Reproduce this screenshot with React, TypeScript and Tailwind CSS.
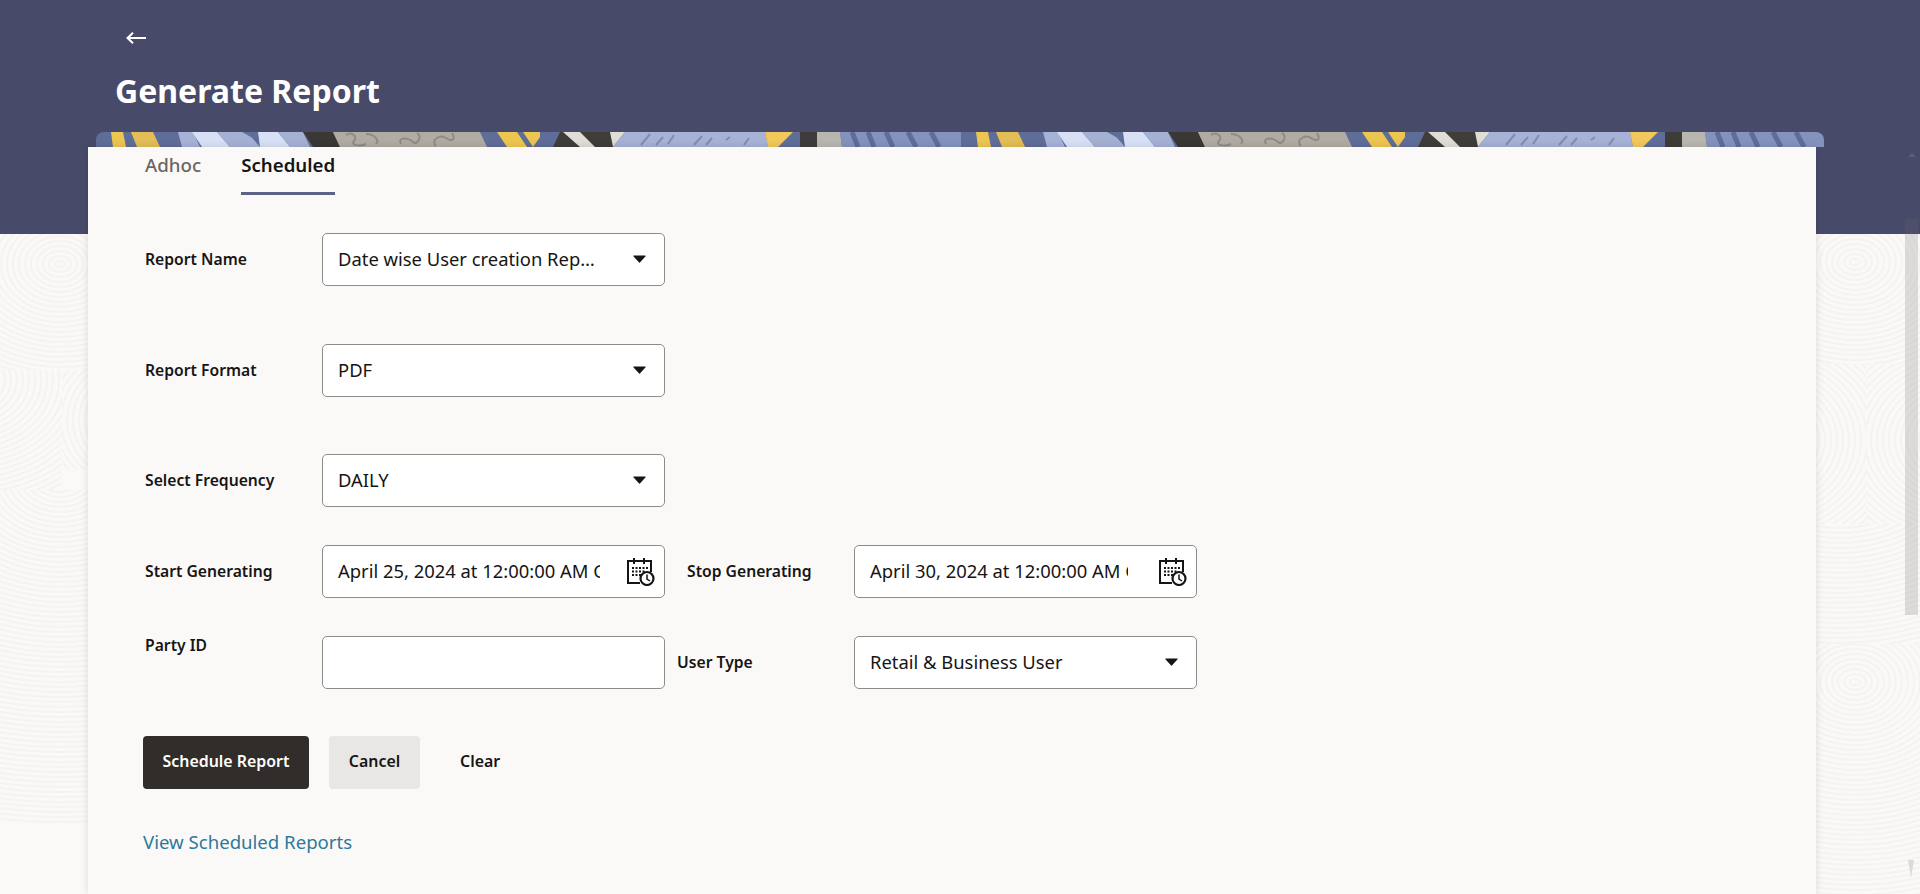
import { ReactNode } from 'react';

// each zone clips one swirl so the rings don't cross each other
const swirls = [
    { x: 0, y: 234, w: 88, h: 136, cx: 60, cy: 264, n: 34 },
    { x: 0, y: 370, w: 62, h: 120, cx: -30, cy: 380, n: 34 },
    { x: 62, y: 370, w: 26, h: 100, cx: 150, cy: 420, n: 20 },
    { x: 0, y: 490, w: 88, h: 404, cx: 60, cy: 474, n: 70 },
    { x: 1816, y: 234, w: 104, h: 130, cx: 1855, cy: 262, n: 30 },
    { x: 1816, y: 364, w: 50, h: 160, cx: 1760, cy: 440, n: 30 },
    { x: 1866, y: 364, w: 54, h: 160, cx: 1960, cy: 440, n: 30 },
    { x: 1816, y: 524, w: 104, h: 120, cx: 1840, cy: 440, n: 50 },
    { x: 1816, y: 644, w: 104, h: 250, cx: 1855, cy: 682, n: 44 },
];

function FingerprintBackground() {
    return (
        <svg className="absolute inset-0" width="1920" height="894" fill="none" stroke="#f5f3f1" strokeWidth="2">
            {swirls.map((s) => (
                <svg key={`${s.x}-${s.y}`} x={s.x} y={s.y} width={s.w} height={s.h}>
                    {Array.from({ length: s.n }, (_, i) => (
                        <ellipse key={i} cx={s.cx - s.x} cy={s.cy - s.y} rx={5 + i * 6} ry={3 + i * 5} />
                    ))}
                </svg>
            ))}
        </svg>
    );
}

function BannerStrip() {
    return (
        <svg width="1728" height="15" className="block">
            <defs>
                <pattern id="tile" patternUnits="userSpaceOnUse" width="865" height="15">
                    <rect width="865" height="15" fill="#5f6d99" />
                    <polygon points="15,0 27,0 30,15 17,15" fill="#edc551" />
                    <polygon points="35,0 57,0 64,15 41,15" fill="#e3bd55" />
                    <polygon points="82,0 97,0 104,15 86,15" fill="#a6b2d6" />
                    <polygon points="96,0 121,0 134,15 106,15" fill="#d8e0f5" />
                    <polygon points="121,0 151,0 164,15 134,15" fill="#a5b1d3" />
                    <polygon points="146,0 162,0 162,9" fill="#5f6d99" />
                    <polygon points="162,0 182,0 194,15 164,15" fill="#d8e0f5" />
                    <polygon points="182,0 207,0 214,15 194,15" fill="#a5b1d3" />
                    <polygon points="207,0 237,0 244,15 217,15" fill="#3a3835" />
                    <polygon points="237,0 384,0 391,15 244,15" fill="#b0aba3" />
                    <path
                        d="M250 3c6-4 12 2 8 6s6 6 12 3M270 2c8 0 14 6 10 10M305 12c-4-8 8-6 12-2s10-6 4-9M340 14c-6-6 4-12 10-8s10 2 6-5"
                        fill="none"
                        stroke="#8f8b85"
                        strokeWidth="2"
                    />
                    <polygon points="401,0 421,0 431,15 411,15" fill="#edc551" />
                    <polygon points="427,0 444,0 444,5 437,15" fill="#edc551" />
                    <polygon points="464,0 484,0 517,0 529,0 517,15 457,15" fill="#3f3d3a" />
                    <polygon points="467,0 484,0 499,15 484,15" fill="#e0ddd6" />
                    <polygon points="514,0 529,0 517,15" fill="#e0ddd6" />
                    <polygon points="529,0 669,0 672,15 517,15" fill="#a6b2d6" />
                    <path
                        d="M545 13l9-11M560 13l7-8M572 12l6-9M598 13l8-9M610 13l6-7M630 8l4-3M648 13l5-7"
                        fill="none"
                        stroke="#7f8cb5"
                        strokeWidth="2"
                    />
                    <polygon points="669,0 697,0 682,15 672,15" fill="#f2c75c" />
                    <polygon points="704,0 721,0 721,15 704,15" fill="#3e3c3a" />
                    <polygon points="721,0 744,0 746,15 721,15" fill="#b9b6af" />
                    <polygon points="744,0 865,0 865,15 746,15" fill="#8493bd" />
                    <path
                        d="M756 0l6 15M772 0l6 15M790 0l7 15M812 0l8 15M835 0l8 15"
                        fill="none"
                        stroke="#5f6d99"
                        strokeWidth="5"
                    />
                </pattern>
            </defs>
            <rect width="1728" height="15" fill="url(#tile)" />
        </svg>
    );
}

function Caret() {
    return (
        <svg width="13" height="8" viewBox="0 0 13 8" className="shrink-0">
            <path d="M0.8 0.5h11.4a.5.5 0 0 1 .4.8L6.9 7.6a.5.5 0 0 1-.8 0L.4 1.3a.5.5 0 0 1 .4-.8z" fill="#161513" />
        </svg>
    );
}

function CalendarClock() {
    return (
        <svg width="28" height="28" viewBox="0 0 28 28" fill="none" className="shrink-0">
            <path d="M13 25H1V3h23v11" stroke="#161513" strokeWidth="2" />
            <path d="M7 0v6M17 0v6" stroke="#161513" strokeWidth="2" />
            <path
                d="M5 9h2v2H5zM8.500 9h2v2h-2zM12 9h2v2h-2zM15.500 9h2v2h-2zM19 9h2v2h-2zM5 12.500h2v2H5zM8.500 12.500h2v2h-2zM12 12.500h2v2h-2zM15.500 12.500h2v2h-2zM5 16h2v2H5zM8.500 16h2v2h-2zM12 16h2v2h-2z"
                fill="#161513"
            />
            <circle cx="20" cy="20.500" r="6.500" fill="#fff" stroke="#161513" strokeWidth="2.200" />
            <path d="M20 16.500v4.500l3 2" stroke="#161513" strokeWidth="1.500" />
        </svg>
    );
}

function Field({ children, icon }: { children?: ReactNode; icon?: ReactNode }) {
    return (
        <div className="flex h-[53px] w-[343px] shrink-0 items-center rounded-[5px] border border-[#8f8c88] bg-white pl-[15px] pr-[9px] text-[18.400px] text-[#161513]">
            <div className="min-w-0 flex-1 overflow-hidden whitespace-nowrap pb-[1px]">{children}</div>
            {icon}
        </div>
    );
}

function SelectField({ value }: { value: string }) {
    return (
        <div className="flex h-[53px] w-[343px] shrink-0 items-center rounded-[5px] border border-[#8f8c88] bg-white pl-[15px] pr-[18px] text-[18.400px] text-[#161513]">
            <div className="min-w-0 flex-1 whitespace-nowrap pb-[1px]">{value}</div>
            <div className="mb-[1px]">
                <Caret />
            </div>
        </div>
    );
}

function Label({ children, className }: { children: ReactNode; className: string }) {
    return <div className={`shrink-0 text-[15.700px] font-semibold text-[#161513] ${className}`}>{children}</div>;
}

export default function App() {
    return (
        <div
            className="relative h-[894px] w-[1920px] overflow-hidden bg-[#fbf9f8]"
            style={{ fontFamily: '"Noto Sans", sans-serif' }}
        >
            <FingerprintBackground />

            {/* Header band */}
            <header className="relative h-[234px] bg-[#474b69]">
                <div className="pl-[126px] pt-[32px]">
                    <svg width="20" height="12" viewBox="0 0 20 12" fill="none" className="block">
                        <path d="M20 6H2M7 .7 1.500 6 7 11.300" stroke="#fff" strokeWidth="2" />
                    </svg>
                </div>
                <h1 className="ml-[115px] mt-[25px] text-[32px] font-bold leading-[44px] text-white">Generate Report</h1>
                <div className="ml-[96px] mt-[19px] w-[1728px] overflow-hidden rounded-t-lg">
                    <BannerStrip />
                </div>
            </header>

            {/* Card */}
            <main className="relative ml-[88px] mt-[-87px] h-[747px] w-[1728px] bg-[#fbf9f8] shadow-[0_0_8px_rgba(0,0,0,0.12)]">
                <div className="flex h-[48px] gap-[40px] pl-[57px] text-[18.700px]">
                    <div className="font-medium leading-[36px] text-[#6b6663]">Adhoc</div>
                    <div className="border-b-[3px] border-[#5c6285] font-semibold leading-[36px] text-[#161513]">
                        Scheduled
                    </div>
                </div>

                <div className="mt-[38px] flex flex-col pl-[57px]">
                    <div className="flex items-center">
                        <Label className="w-[177px]">Report Name</Label>
                        <SelectField value="Date wise User creation Rep…" />
                    </div>
                    <div className="mt-[58px] flex items-center">
                        <Label className="w-[177px]">Report Format</Label>
                        <SelectField value="PDF" />
                    </div>
                    <div className="mt-[57px] flex items-center">
                        <Label className="w-[177px]">Select Frequency</Label>
                        <SelectField value="DAILY" />
                    </div>
                    <div className="mt-[38px] flex items-center">
                        <Label className="w-[177px]">Start Generating</Label>
                        <Field icon={<CalendarClock />}>
                            <div className="w-[262px] overflow-hidden">April 25, 2024 at 12:00:00 AM GMT</div>
                        </Field>
                        <Label className="ml-[22px] w-[167px]">Stop Generating</Label>
                        <Field icon={<CalendarClock />}>
                            <div className="w-[258px] overflow-hidden">April 30, 2024 at 12:00:00 AM GMT</div>
                        </Field>
                    </div>
                    <div className="mt-[36px] flex items-center">
                        <Label className="mb-[33px] w-[177px]">Party ID</Label>
                        <Field />
                        <Label className="ml-[12px] w-[177px]">User Type</Label>
                        <SelectField value="Retail & Business User" />
                    </div>

                    <div className="ml-[-2px] mt-[45px] flex items-center text-[15.900px] font-semibold">
                        <button className="h-[53px] w-[166px] rounded-[4px] bg-[#312d2a] text-white">Schedule Report</button>
                        <button className="ml-[20px] h-[53px] w-[91px] rounded-[4px] bg-[#e9e7e5] text-[#161513]">
                            Cancel
                        </button>
                        <button className="ml-[40px] h-[53px] text-[#161513]">Clear</button>
                    </div>

                    <a className="ml-[-2px] mt-[40px] text-[18.600px] leading-[26px] text-[#2c7a9a]">View Scheduled Reports</a>
                </div>
            </main>

            {/* Page scrollbar */}
            <div className="absolute left-[1905px] top-[219px] h-[396px] w-[13px] bg-[#6b6663]/20" />
            <div className="absolute left-[1908px] top-[153px] h-0 w-0 border-x-[4px] border-b-[4px] border-x-transparent border-b-[#5a5e7a]" />
            <div className="absolute left-[1908px] top-[860px] h-0 w-0 border-x-[3.500px] border-t-[18px] border-x-transparent border-t-[#dcdad8]" />
        </div>
    );
}
